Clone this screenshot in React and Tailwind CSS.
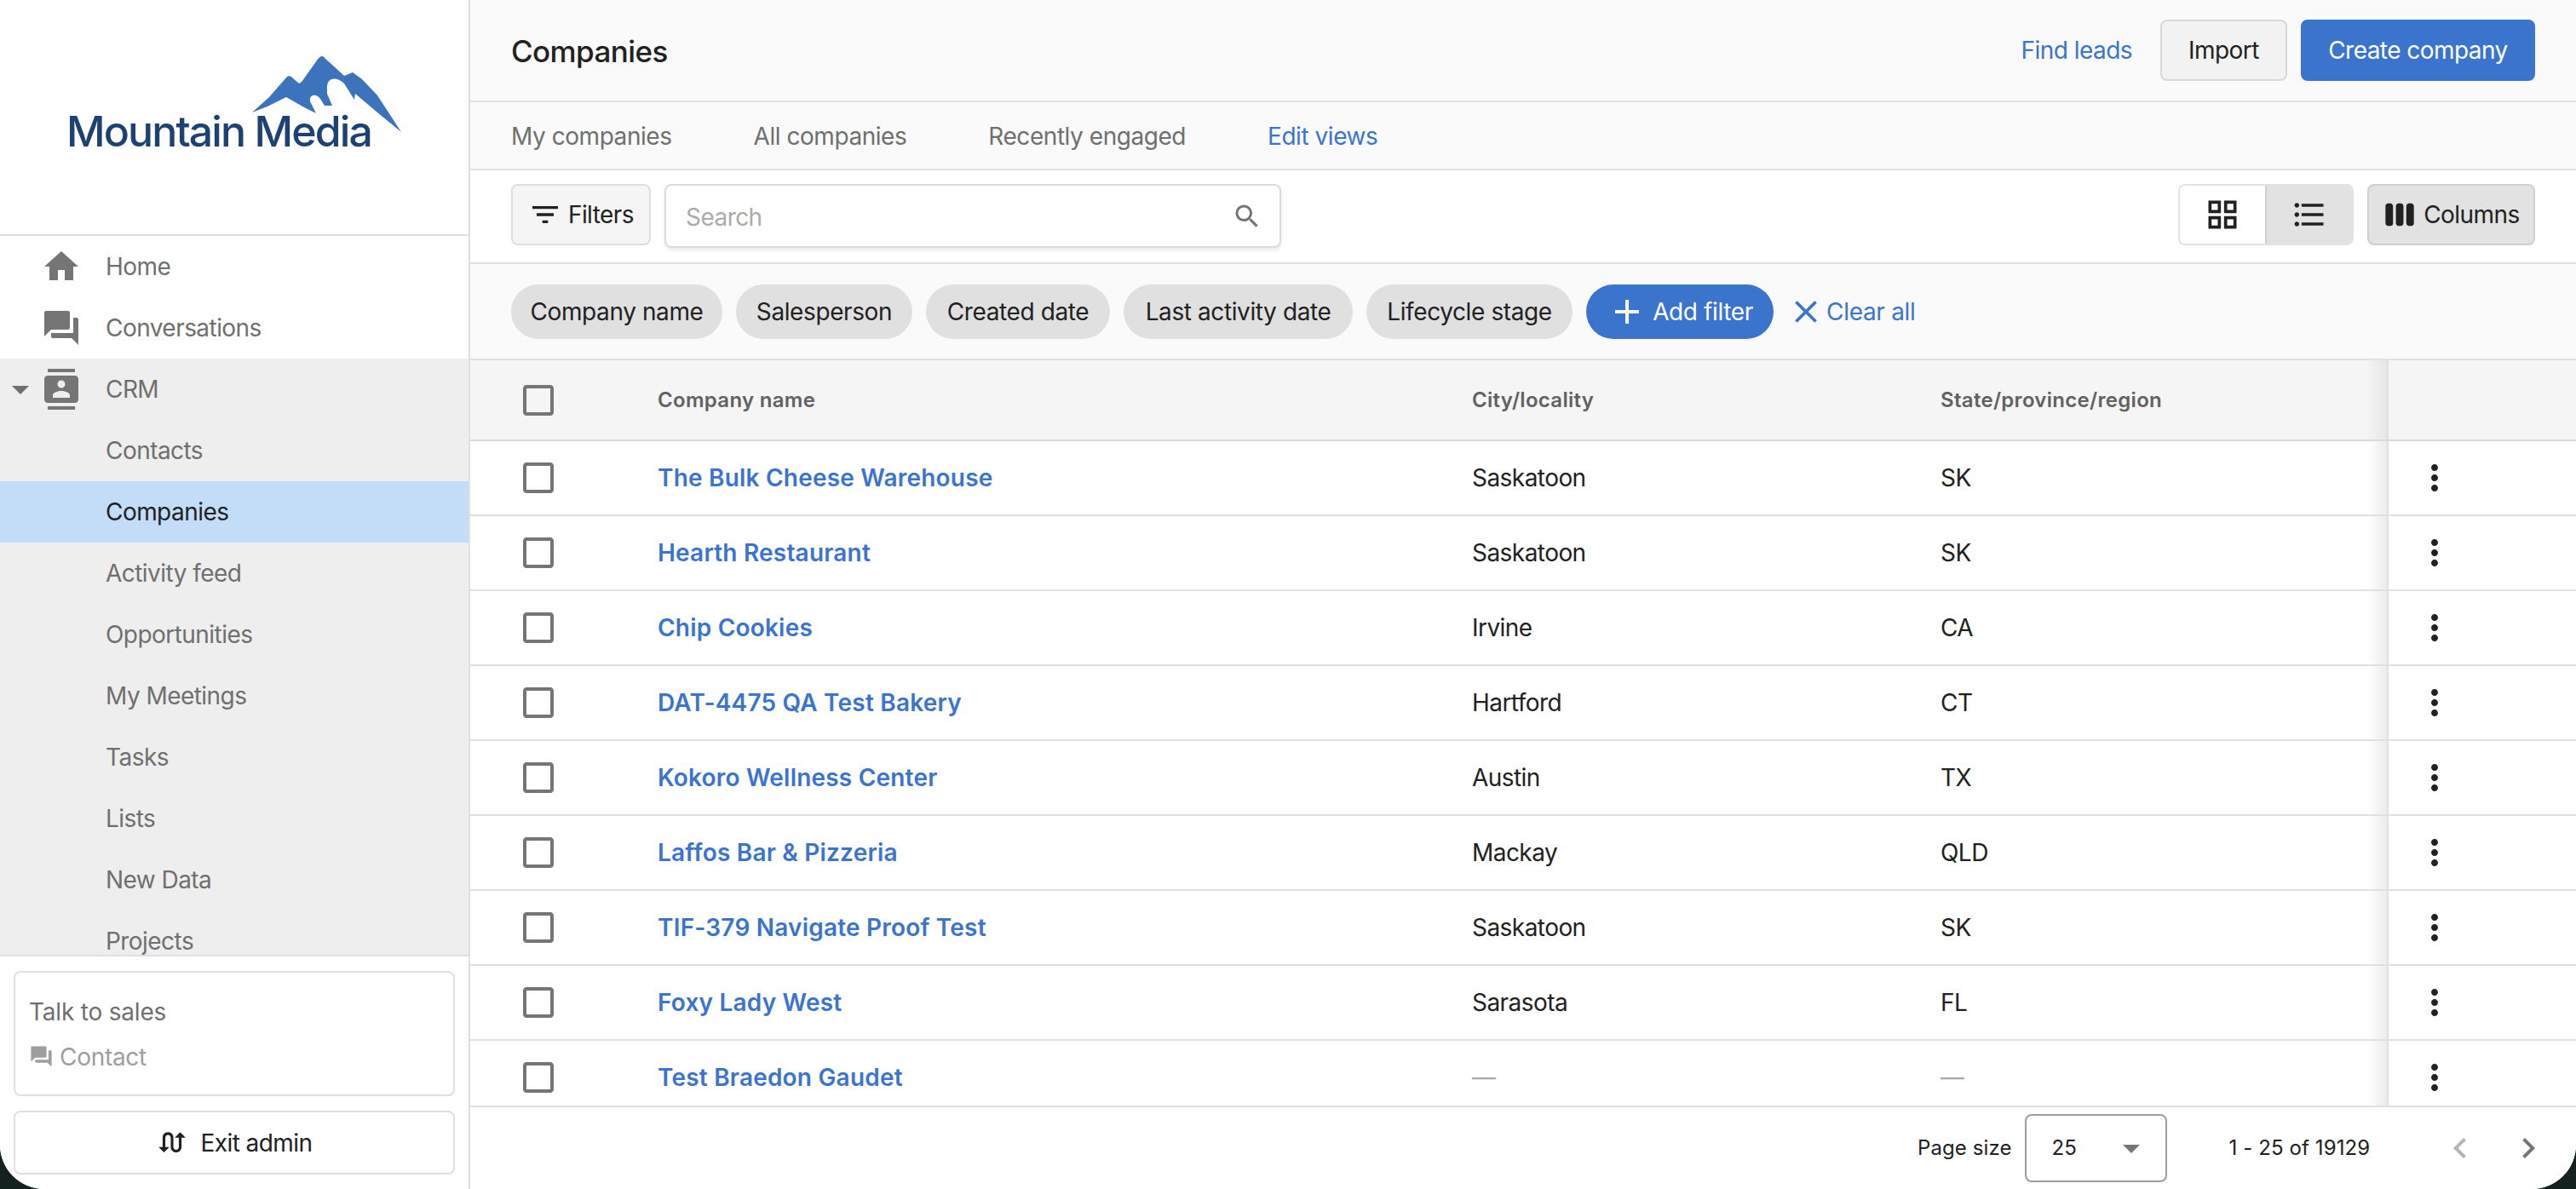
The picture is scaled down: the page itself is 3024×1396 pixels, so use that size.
import React from 'react';
import {
  MdHome, MdForum, MdContacts, MdArrowDropDown, MdSwapCalls, MdFilterList, MdSearch,
  MdOutlineGridView, MdFormatListBulleted, MdViewWeek, MdMoreVert, MdAdd, MdClose,
  MdChevronLeft, MdChevronRight, MdCheckBoxOutlineBlank,
} from 'react-icons/md';

const subNav = ['Contacts', 'Companies', 'Activity feed', 'Opportunities', 'My Meetings', 'Tasks', 'Lists', 'New Data', 'Projects'];
const filters = [
  { label: 'Company name', width: 'w-[248px]' },
  { label: 'Salesperson', width: 'w-[207px]' },
  { label: 'Created date', width: 'w-[216px]' },
  { label: 'Last activity date', width: 'w-[269px]' },
  { label: 'Lifecycle stage', width: 'w-[242px]' },
];
const rows = [
  ['The Bulk Cheese Warehouse', 'Saskatoon', 'SK'],
  ['Hearth Restaurant', 'Saskatoon', 'SK'],
  ['Chip Cookies', 'Irvine', 'CA'],
  ['DAT-4475 QA Test Bakery', 'Hartford', 'CT'],
  ['Kokoro Wellness Center', 'Austin', 'TX'],
  ['Laffos Bar & Pizzeria', 'Mackay', 'QLD'],
  ['TIF-379 Navigate Proof Test', 'Saskatoon', 'SK'],
  ['Foxy Lady West', 'Sarasota', 'FL'],
  ['Test Braedon Gaudet', '—', '—'],
];

const Logo = () => (
  <div className="h-[275px] shrink-0 pl-[78px] pt-[65px]">
    <svg className="ml-[218px] block" width="176" height="91" viewBox="296 65 176 91">
      <path
        fill="#3b74bc"
        d="M296 132 L316 114 L337 90 Q341 88 344 92 L351 98 Q354 97 357 92 L372 71 Q378 62 382 69 L391 77 L404 89 L414 85 L425 93 L443 112 L471 155 L443 132 L417 110 L416 117 L404 98 Q396 91 389 93 Q383 96 384 105 L384 110 L390 124 L381 124 L376 116 Q372 111 367 112 Q363 114 364 119 L371 133 L357 126 L336 114 L314 125 Z"
      />
    </svg>
    <div className="-mt-[27px] text-[50px] font-medium leading-[50px] tracking-[-1.9px] text-[#1c4273]">Mountain Media</div>
  </div>
);

const TopNavItem = ({ icon: Icon, label, caret }) => (
  <div className={`relative flex h-[72px] shrink-0 items-center pl-[48px] ${caret ? 'bg-[#eeeeee]' : ''}`}>
    {caret && <MdArrowDropDown size={48} className="absolute left-0 text-[#6f6f6f]" />}
    <Icon size={48} className="text-[#757575]" />
    <span className="ml-[28px] text-[#6f6f6f]">{label}</span>
  </div>
);

const Sidebar = () => (
  <aside className="flex h-full w-[552px] shrink-0 flex-col border-r-2 border-[#e0e0e0] bg-white">
    <Logo />
    <nav className="h-[848px] shrink-0 overflow-hidden border-t-2 border-b-2 border-[#e0e0e0]">
      <TopNavItem icon={MdHome} label="Home" />
      <TopNavItem icon={MdForum} label="Conversations" />
      <TopNavItem icon={MdContacts} label="CRM" caret />
      <div className="bg-[#eeeeee] pb-[40px]">
        {subNav.map((item) => (
          <div
            key={item}
            className={`flex h-[72px] items-center pl-[124px] ${item === 'Companies' ? 'bg-[#c3ddf9] text-[#212121]' : 'text-[#6f6f6f]'}`}
          >
            {item}
          </div>
        ))}
      </div>
    </nav>
    <div className="flex flex-col gap-[17px] px-[16px] pt-[17px]">
      <div className="flex h-[147px] flex-col justify-center rounded-lg border-2 border-[#e0e0e0] px-[16px] pt-[1px]">
        <div className="tracking-[-0.2px] text-[#6f6f6f]">Talk to sales</div>
        <div className="mt-[11px] flex items-center gap-[7px] tracking-[-0.3px] text-[#9e9e9e]">
          <MdForum size={29} />
          <span>Contact</span>
        </div>
      </div>
      <div className="flex h-[75px] items-center justify-center gap-[14px] rounded-lg border-2 border-[#e0e0e0] pt-[1px] text-[#212121]">
        <MdSwapCalls size={38} />
        <span>Exit admin</span>
      </div>
    </div>
  </aside>
);

const Header = () => (
  <>
    <div className="flex h-[120px] shrink-0 items-center justify-between border-b-2 border-[#e0e0e0] bg-[#fafafa] pl-[48px] pr-[48px]">
      <h1 className="pt-[2px] text-[35px] font-medium tracking-[-0.6px] text-[#212121]">Companies</h1>
      <div className="flex items-center">
        <span className="mr-[33px] text-[#3b74cc]">Find leads</span>
        <button className="h-[72px] w-[149px] rounded-lg border-2 border-[#d8d8d8] bg-[#f2f2f2] text-[#212121]">Import</button>
        <button className="ml-[16px] h-[72px] w-[275px] rounded-lg bg-[#3b74cc] text-white">Create company</button>
      </div>
    </div>
    <div className="flex h-[80px] shrink-0 items-center gap-[96px] border-b-2 border-[#e0e0e0] bg-[#fafafa] pl-[48px] pt-[2px] tracking-[-0.45px] text-[#6f6f6f]">
      <span>My companies</span>
      <span>All companies</span>
      <span>Recently engaged</span>
      <span className="text-[#3b74cc]">Edit views</span>
    </div>
  </>
);

const Toolbar = () => (
  <div className="flex h-[110px] shrink-0 items-start justify-between border-b-2 border-[#e0e0e0] bg-white px-[48px] pt-[16px]">
    <div className="flex items-start gap-[16px]">
      <button className="flex h-[72px] w-[164px] items-center justify-center gap-[7px] rounded-lg border-2 border-[#dddddd] bg-[#f5f5f5] text-[#212121]">
        <MdFilterList size={40} />
        Filters
      </button>
      <div className="flex h-[75px] w-[724px] items-center justify-between rounded-lg border-2 border-[#dcdcdc] bg-white pl-[23px] pr-[20px] pt-[2px] shadow-[0_3px_4px_rgba(0,0,0,0.08)]">
        <span className="text-[#ababab]">Search</span>
        <MdSearch size={36} className="-mt-[2px] text-[#757575]" />
      </div>
    </div>
    <div className="flex items-start gap-[16px]">
      <div className="flex h-[72px] w-[206px] overflow-hidden rounded-lg border-2 border-[#e2e2e2]">
        <div className="flex flex-1 items-center justify-center border-r-2 border-[#cfcfcf] bg-white">
          <MdOutlineGridView size={44} className="text-[#212121]" />
        </div>
        <div className="flex flex-1 items-center justify-center bg-[#e2e2e2]">
          <MdFormatListBulleted size={44} className="text-[#212121]" />
        </div>
      </div>
      <button className="flex h-[72px] w-[197px] items-center justify-center gap-[8px] rounded-lg border-2 border-[#cfcfcf] bg-[#e2e2e2] text-[#212121]">
        <MdViewWeek size={40} />
        Columns
      </button>
    </div>
  </div>
);

const FilterChips = () => (
  <div className="flex h-[113px] shrink-0 items-center gap-[16px] border-b-2 border-[#e0e0e0] bg-[#fafafa] pl-[48px] tracking-[-0.4px]">
    {filters.map((f) => (
      <span key={f.label} className={`flex h-[64px] items-center justify-center rounded-full bg-[#e0e0e0] text-[#212121] ${f.width}`}>{f.label}</span>
    ))}
    <button className="flex h-[64px] w-[220px] items-center justify-center gap-[6px] rounded-full bg-[#3b74cc] text-white">
      <MdAdd size={48} />
      Add filter
    </button>
    <span className="flex items-center gap-[2px] tracking-[-0.3px] text-[#3b74cc]">
      <MdClose size={44} />
      Clear all
    </span>
  </div>
);

const StickyShadow = ({ sharp }) => (
  <div className={`absolute inset-y-0 right-0 w-[22px] bg-gradient-to-l ${sharp ? 'from-[#e6e6e6] to-[#f3f3f3]' : 'from-[#ececec] to-white'}`} />
);

const Table = () => (
  <div className="relative min-h-0 flex-1 overflow-hidden bg-white">
    <div className="flex h-[95px] items-center border-b-2 border-[#d9d9d9] bg-[#f5f5f5] text-[24px] font-semibold tracking-[0.3px] text-[#616161]">
      <div className="flex w-[220px] pl-[56px]">
        <MdCheckBoxOutlineBlank size={48} className="text-[#757575]" />
      </div>
      <div className="w-[956px]">Company name</div>
      <div className="w-[550px]">City/locality</div>
      <div className="relative flex h-full w-[524px] items-center">
        State/province/region
        <StickyShadow sharp />
      </div>
      <div className="h-full flex-1 border-l-2 border-[#e0e0e0]" />
    </div>
    {rows.map((row) => (
      <div key={row[0]} className="flex h-[88px] items-center border-b-2 border-[#e0e0e0] text-[#212121]">
        <div className="flex w-[220px] pl-[56px]">
          <MdCheckBoxOutlineBlank size={48} className="text-[#757575]" />
        </div>
        <div className="w-[956px] font-semibold tracking-[0.2px] text-[#3b74cc]">{row[0]}</div>
        <div className={`w-[550px] ${row[1] === '—' ? 'text-[#a8a8a8]' : ''}`}>{row[1]}</div>
        <div className={`relative flex h-full w-[524px] items-center ${row[2] === '—' ? 'text-[#a8a8a8]' : ''}`}>
          {row[2]}
          <StickyShadow />
        </div>
        <div className="flex h-full flex-1 items-center border-l-2 border-[#e0e0e0] pl-[30px]">
          <MdMoreVert size={48} className="text-[#212121]" />
        </div>
      </div>
    ))}
  </div>
);

const Footer = () => (
  <div className="flex h-[98px] shrink-0 items-center border-t-2 border-[#e0e0e0] bg-white pl-[1699px] text-[24px] tracking-[0.1px] text-[#212121]">
    <span>Page size</span>
    <div className="relative ml-[15px] flex h-[80px] w-[167px] items-center rounded-lg border-2 border-[#9e9e9e] pl-[30px]">
      25
      <MdArrowDropDown size={48} className="absolute right-[16px] text-[#757575]" />
    </div>
    <span className="ml-[73px]">1 - 25 of 19129</span>
    <MdChevronLeft size={48} className="ml-[82px] text-[#b5b5b5]" />
    <MdChevronRight size={48} className="ml-[32px] text-[#757575]" />
  </div>
);

export default function App() {
  return (
    <div className="h-[1396px] w-[3024px] overflow-hidden bg-[#13211f] font-['Inter',sans-serif] text-[28px] tracking-[-0.55px]">
      <div className="flex h-full overflow-hidden rounded-b-[52px] bg-white">
        <Sidebar />
        <main className="flex min-w-0 flex-1 flex-col">
          <Header />
          <Toolbar />
          <FilterChips />
          <Table />
          <Footer />
        </main>
      </div>
    </div>
  );
}
